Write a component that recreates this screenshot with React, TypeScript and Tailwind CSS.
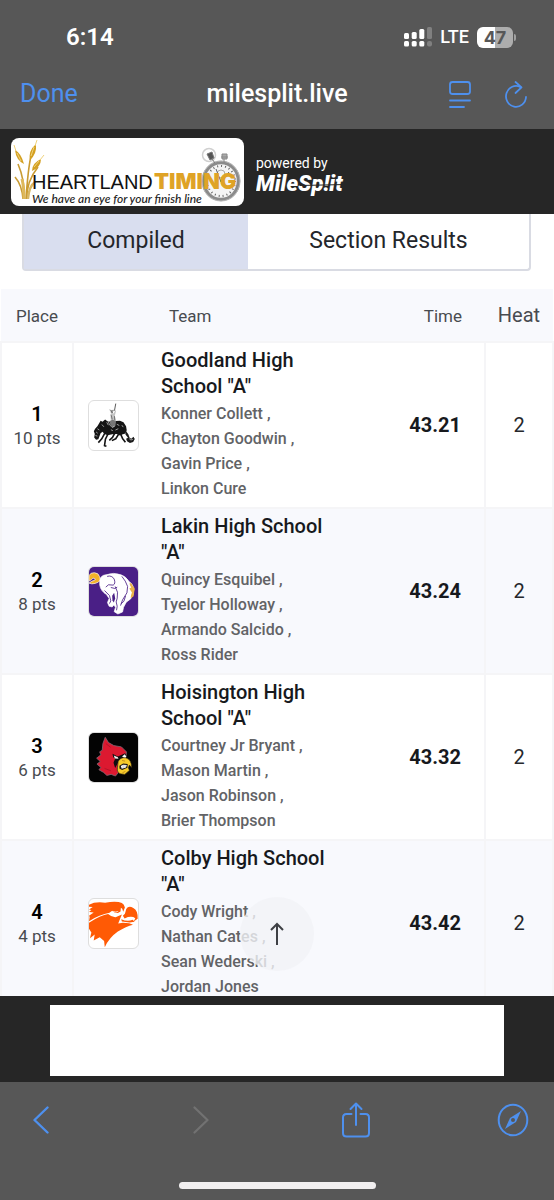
import React from "react";

type Team = {
  place: number;
  points: number;
  name: string;
  members: string[];
  time: string;
  heat: number;
  logo: React.ReactNode;
};

function CowboyLogo() {
  return (
    <svg viewBox="25 30 150 152" className="size-full" aria-hidden="true">
      <path d="M107 38 L103 60" stroke="#555" strokeWidth="3" fill="none" />
      <path d="M86 56 L94 58 L103 57 L99 62 L98 69 L92 69 L91 62 Z" fill="#999" />
      <path d="M90 71 L101 68 L106 58 L108 61 L104 76 L108 92 L92 94 Z" fill="#c4c4c4" />
      <path d="M93 74l3 13M103 77l1 13M92 62l5 4" stroke="#444" strokeWidth="2" fill="none" />
      <path
        d="M56 98 L60 91 L66 94 L74 87 L80 92 L90 94 L106 92 L120 91 L131 96 L139 108 L141 121 L137 131 L127 134 L120 137 L110 132 L96 133 L82 136 L72 132 L66 125 L60 130 L57 138 L53 149 L46 150 L40 143 L42 132 L39 124 L43 116 L50 108 Z"
        fill="#151515"
      />
      <path d="M138 122 L146 133 L150 144 L155 147 L162 141 L166 148 L161 157 L151 160 L142 155 L139 147 L145 144 L137 134 Z" fill="#1c1c1c" />
      <path
        d="M74 128 L63 148 L53 159M84 130 L75 148 L72 169 L78 170M104 130 L97 143 L87 152M117 131 L107 147 L95 153M121 130 L128 146 L137 158"
        stroke="#151515"
        strokeWidth="5"
        strokeLinejoin="round"
        fill="none"
      />
      <path d="M88 92 L98 88 L108 93 L106 107 L98 112 L90 104 Z" fill="#777" />
      <path
        d="M82 90l6 14 8 8 8-4M79 96l5 9M50 116l6 4M46 126l5 4M44 137l6 2M64 103l6 7M110 102l8 4M115 116l-9 4M126 105l4 6M92 119l6 3M149 147l5 4 6-2"
        stroke="#e6e6e6"
        strokeWidth="2"
        fill="none"
      />
    </svg>
  );
}

function BroncoLogo() {
  return (
    <svg viewBox="26 26 146 146" className="size-full" aria-hidden="true">
      <rect x="26" y="26" width="146" height="146" fill="#4a1f86" />
      <path
        d="M26 52 Q30 42 42 43 Q55 44 57 54 L61 64 Q55 73 44 75 Q34 78 26 74 L35 68 Q44 67 45 62 L38 59 Q34 65 26 68 Z"
        fill="#f3b229"
        stroke="#fff"
        strokeWidth="2"
      />
      <path
        d="M58 66 Q60 51 77 49 Q100 41 121 49 Q136 54 146 70 Q158 77 159 91 Q161 108 150 121 L137 131 L129 146 L126 160 L112 166 L101 159 L105 146 L100 139 L95 145 L86 143 L81 132 L86 120 L78 108 Q61 98 58 80 Z"
        fill="#fff"
        stroke="#fff"
        strokeWidth="2"
        strokeLinejoin="round"
      />
      <path
        d="M80 54 Q94 50 101 62 Q106 76 98 80 L84 79 L76 86M91 87 L103 90 L110 86M72 96 L87 111 L91 127 L87 135M104 84 Q115 101 110 119 L107 130 L110 143 L108 155M124 54 L134 68 L141 84 L139 103 L126 124 L120 141M135 112 L130 128 L121 136"
        fill="none"
        stroke="#4a1f86"
        strokeWidth="2.5"
      />
      <path d="M95 112 L101 103 L104 120 L100 132 L96 126 Z" fill="#4a1f86" />
      <path d="M147 73 Q155 74 157 83 Q165 89 161 98 L159 113 L150 120 Q150 110 154 102 L146 90 L152 87 Q146 81 147 73Z" fill="#eab24b" />
    </svg>
  );
}

function CardinalLogo() {
  return (
    <svg viewBox="26 26 148 148" className="size-full" aria-hidden="true">
      <rect x="26" y="26" width="148" height="148" fill="#030303" />
      <path
        d="M75 39 L85 55 L101 64 L124 68 L139 83 L138 96 L119 113 L112 132 L115 145 L106 156 L93 151 L80 154 L70 145 L56 137 L62 130 L50 120 L60 112 L49 102 L62 92 L58 83 L66 78 L68 58 Z"
        fill="#dc1930"
        stroke="#7e6875"
        strokeWidth="2.5"
      />
      <path d="M77 58 L91 69M73 133 L92 140" stroke="#9f1027" strokeWidth="2" fill="none" />
      <path d="M97 89 L113 97 L135 87 L141 98 L125 107 L116 112 L105 132 L100 116 L105 103 L99 99 Z" fill="#100e10" />
      <path d="M101 94l12 5 2 5-11-1z" fill="#f8f4f2" />
      <path d="M126 97l8-7 5 8-4 5z" fill="#fff" />
      <path
        d="M114 112 Q121 98 137 101 Q154 105 155 130 L148 123 L145 131 L148 139 L134 151 L119 149 Q108 142 112 130 Z"
        fill="#f7cb2b"
        stroke="#2d2412"
        strokeWidth="2"
      />
      <path d="M118 125 L129 118 L143 120 L142 131 L126 138 L118 133 Z" fill="#1c1714" />
      <path d="M122 126l7-4 11 1-2 7-13 4z" fill="#fff" />
      <path d="M129 122v11M135 122v9" stroke="#555" strokeWidth="1" />
      <path d="M126 109l9 2M127 146l9-4" stroke="#aa7416" strokeWidth="2" />
    </svg>
  );
}

function EagleLogo() {
  return (
    <svg viewBox="26 26 146 146" className="size-full" aria-hidden="true">
      <path
        d="M26 43 Q45 33 74 37 Q108 31 124 38 Q131 42 133 51 L128 64 L125 55 L121 52 L120 63 L112 68 Q101 68 95 61 L87 67 Q58 72 26 92 L28 80 L26 76 L40 66 L26 65 L33 59 L26 57 L37 50 L26 49 Z"
        fill="#ff5a05"
      />
      <path d="M137 56 Q144 44 158 53 Q172 60 171 85 L159 93 L164 83 Q155 76 142 80 L132 84 L127 76 L133 70 Z" fill="#ff5a05" />
      <path
        d="M26 97 Q61 74 83 71 Q93 81 107 80 L124 72 L119 84 L113 99 L127 97 L146 98 L157 103 Q137 108 112 123 Q86 141 73 170 L71 151 L58 140 L40 150 L43 132 L29 143 L33 126 L26 115 Z"
        fill="#ff5a05"
      />
      <path d="M90 66 Q99 76 112 72 L122 67M98 63 Q105 66 113 63" fill="none" stroke="#fff" strokeWidth="2" />
      <path d="M122 86 Q140 94 156 88 L162 94 L147 96 L124 93 Z" fill="#ff5a05" />
    </svg>
  );
}

const teams: Team[] = [
  {
    place: 1,
    points: 10,
    name: 'Goodland High School "A"',
    members: ["Konner Collett", "Chayton Goodwin", "Gavin Price", "Linkon Cure"],
    time: "43.21",
    heat: 2,
    logo: <CowboyLogo />,
  },
  {
    place: 2,
    points: 8,
    name: 'Lakin High School "A"',
    members: ["Quincy Esquibel", "Tyelor Holloway", "Armando Salcido", "Ross Rider"],
    time: "43.24",
    heat: 2,
    logo: <BroncoLogo />,
  },
  {
    place: 3,
    points: 6,
    name: 'Hoisington High School "A"',
    members: ["Courtney Jr Bryant", "Mason Martin", "Jason Robinson", "Brier Thompson"],
    time: "43.32",
    heat: 2,
    logo: <CardinalLogo />,
  },
  {
    place: 4,
    points: 4,
    name: 'Colby High School "A"',
    members: ["Cody Wright", "Nathan Cates", "Sean Wederski", "Jordan Jones"],
    time: "43.42",
    heat: 2,
    logo: <EagleLogo />,
  },
];

function StatusBar() {
  return (
    <div className="flex h-[74px] items-center justify-between pl-[66px] pr-[38px] text-white">
      <span className="text-2xl font-semibold">6:14</span>
      <div className="flex items-center gap-2">
        <svg width="28" height="20" viewBox="0 0 28 20" fill="#fff" aria-label="Signal strength">
          <rect x="0" y="6" width="5" height="6" rx="1.5" />
          <rect x="7.7" y="5" width="5" height="7" rx="1.5" />
          <rect x="15.3" y="2" width="5" height="10" rx="1.5" />
          <rect x="23" y="0" width="5" height="12" rx="1.5" fill="#808080" />
          <rect x="0" y="14" width="5" height="5.5" rx="1.5" />
          <rect x="7.7" y="14" width="5" height="5.5" rx="1.5" />
          <rect x="15.3" y="14" width="5" height="5.5" rx="1.5" />
          <rect x="23" y="14" width="5" height="5.5" rx="2" fill="#808080" />
        </svg>
        <span className="text-lg leading-6 font-medium">LTE</span>
        <div className="flex items-center gap-px">
          <div className="h-[21px] w-9 rounded-md bg-linear-to-r from-white from-50% to-[#adadad] to-50% text-center font-[Inter] text-lg leading-[21px] font-bold text-[#575757]">
            47
          </div>
          <span className="h-[7px] w-0.5 rounded-r-full bg-[#a0a0a0]" />
        </div>
      </div>
    </div>
  );
}

function NavBar() {
  return (
    <div className="grid h-[55px] grid-cols-[1fr_auto_1fr] items-start px-5 pt-0.5">
      <button type="button" className="justify-self-start text-[25px] leading-9 text-[#4e90ee]">
        Done
      </button>
      <h1 className="text-[25px] leading-9 font-medium text-white">milesplit.live</h1>
      <div className="flex items-center gap-8 justify-self-end pr-1.5 pt-1 text-[#4e90ee]">
        <button type="button" aria-label="Reader">
          <svg width="24" height="30" viewBox="0 0 24 30" fill="none" stroke="currentColor" strokeWidth="1.8" strokeLinecap="round">
            <rect x="2" y="2" width="20" height="12" rx="2.5" />
            <path d="M2 20.5h20M2 27h14" />
          </svg>
        </button>
        <button type="button" aria-label="Reload">
          <svg width="24" height="30" viewBox="0 0 24 30" fill="none" stroke="currentColor" strokeWidth="1.8" strokeLinecap="round" strokeLinejoin="round">
            <path d="M16.5 7.1A10 10.4 0 1 0 22 17" />
            <path d="M11.5 2l6 5.3-6 5.7" />
          </svg>
        </button>
      </div>
    </div>
  );
}

function HeartlandLogo() {
  return (
    <svg width="233" height="68" viewBox="0 0 233 68" role="img" aria-label="Heartland Timing">
      <g fill="none" strokeWidth="1.6" stroke="#c99b32">
        <path d="M13 61Q14 42 7 26M15 61Q17 31 20 18M16 61Q15 44 27 29M12 61Q11 47 4 39" />
        <path d="M17 61Q18 48 24 44" stroke="#d8b764" strokeWidth="2.4" />
        <path d="M13 61Q13 49 11 41" stroke="#deb85b" strokeWidth="3" />
      </g>
      <g fill="#d4a022">
        <path d="M4 12Q10 15 13 26Q5 22 4 12Z" />
        <path d="M25 6Q26 16 19 22Q17 13 25 6Z" />
        <path d="M30 21Q30 29 21 33Q21 25 30 21Z" />
      </g>
      <g stroke="#efd27c" strokeWidth="1" fill="none">
        <path d="M6 15l4 8M23 9l-3 9M28 23l-5 6M3 7l2 6M26 2l-2 6M33 17l-4 5" />
      </g>
      <ellipse cx="210" cy="43" rx="17.5" ry="18.5" fill="#f4f4f4" stroke="#8b8b8b" strokeWidth="3.5" />
      <ellipse cx="210" cy="43" rx="19" ry="20" fill="none" stroke="#bbb" strokeWidth="1" />
      <ellipse cx="210" cy="43" rx="14" ry="15" fill="none" stroke="#666" strokeWidth="2" strokeDasharray="1 3" />
      <circle cx="210" cy="36" r="4" fill="none" stroke="#aaa" />
      <path d="M210 44L205 31M210 44l8-10" stroke="#666" strokeWidth="1" />
      <path d="M211 16h5v5h-5zM210 19h7M213 21v4" fill="#aaa" stroke="#888" />
      <circle cx="198" cy="17" r="6.5" fill="none" stroke="#d0d0d0" strokeWidth="1.5" />
      <path d="M196 16l5-2 2 6-4 2zM201 21l3 4" fill="#555" stroke="#777" />
      <text x="21" y="51" fontFamily="Liberation Sans, sans-serif" fontSize="20" fill="#111">
        HEARTLAND
      </text>
      <text x="143" y="51" fontFamily="Inter, sans-serif" fontSize="22" fontWeight="900" fill="#dfa326">
        TIMING
      </text>
      <text x="21" y="65" fontFamily="Lato, sans-serif" fontStyle="italic" fontSize="12" fontWeight="500" fill="#222">
        We have an eye for your finish line
      </text>
    </svg>
  );
}

function SiteHeader() {
  return (
    <header className="flex h-[85px] shrink-0 items-center gap-3 bg-[#262626] px-[11px]">
      <a href="#home" className="block overflow-hidden rounded-lg bg-white">
        <HeartlandLogo />
      </a>
      <a href="#milesplit" className="flex flex-col pt-2 text-white">
        <span className="text-sm leading-4">powered by</span>
        <svg width="92" height="26" viewBox="0 0 92 26" role="img" aria-label="MileSplit">
          <text x="0" y="20" fontFamily="Roboto, sans-serif" fontSize="22" fontWeight="900" fontStyle="italic" fill="#fff">
            MileSp!it
          </text>
          <path d="M44 14.5l46-1" stroke="#262626" strokeWidth="1" />
        </svg>
      </a>
    </header>
  );
}

function ResultRow({ team }: { team: Team }) {
  return (
    <tr className="h-[166px] even:bg-[#f8f9fd]">
      <td className="border-2 border-[#f5f5f7] pt-0.5 text-center">
        <div className="text-xl leading-6 font-semibold text-black">{team.place}</div>
        <div className="text-[17px] leading-6 text-[#484b50]">{team.points} pts</div>
      </td>
      <td className="border-y-2 border-[#f5f5f7] pl-3.5">
        <div className="h-[51px] w-[51px] overflow-hidden rounded-md border border-[#dedede] bg-white">{team.logo}</div>
      </td>
      <td className="border-y-2 border-[#f5f5f7] pl-[11px] align-top">
        <div className="w-44 pt-1 text-xl leading-[26px] font-medium text-[#17191d]">{team.name}</div>
        <ul className="pt-0.5 text-base leading-[25px] font-medium text-[#626366]">
          {team.members.map((member, i) => (
            <li key={member}>
              {member}
              {i < team.members.length - 1 ? " ," : ""}
            </li>
          ))}
        </ul>
      </td>
      <td className="border-y-2 border-[#f5f5f7] pr-[23px] text-right text-xl font-bold text-[#17191d]">{team.time}</td>
      <td className="border-2 border-[#f5f5f7] text-center text-xl text-[#26282c]">{team.heat}</td>
    </tr>
  );
}

function Results() {
  return (
    <main className="relative min-h-0 flex-1 bg-white">
      <div className="h-full overflow-y-auto [scrollbar-width:none]">
        <div role="tablist" className="mr-[23px] ml-[22px] flex h-[57px] rounded-b border-2 border-t-0 border-[#d9dbe3] text-[23px] text-[#24262b]">
          <button type="button" role="tab" aria-selected="true" className="w-[224px] bg-[#d9deef]">
            Compiled
          </button>
          <button type="button" role="tab" aria-selected="false" className="flex-1">
            Section Results
          </button>
        </div>
        <table className="mt-[18px] w-full table-fixed border-collapse">
          <colgroup>
            <col className="w-[72px]" />
            <col className="w-[77px]" />
            <col />
            <col className="w-[110px]" />
            <col className="w-[68px]" />
          </colgroup>
          <thead>
            <tr className="h-[53px] bg-[#f8f9fd] text-[17px] text-[#484b50]">
              <th scope="col" className="pt-1 font-normal">Place</th>
              <th scope="col" colSpan={2} className="pt-1 pl-24 text-left font-normal">Team</th>
              <th scope="col" className="pt-1 pr-[23px] text-right font-normal">Time</th>
              <th scope="col" className="text-xl font-normal">Heat</th>
            </tr>
          </thead>
          <tbody>
            {teams.map((team) => (
              <ResultRow key={team.place} team={team} />
            ))}
          </tbody>
        </table>
      </div>
      <button
        type="button"
        aria-label="Back to top"
        className="absolute bottom-[25px] left-1/2 flex size-[74px] -translate-x-1/2 items-center justify-center rounded-full bg-[#f1f2f6]/80"
      >
        <svg width="14" height="24" viewBox="0 0 14 24" fill="none" stroke="#3e4045" strokeWidth="2">
          <path d="M7 23V2M1 8l6-6 6 6" />
        </svg>
      </button>
    </main>
  );
}

function BottomBar() {
  return (
    <footer className="flex h-[118px] shrink-0 flex-col items-center justify-between bg-[#575757] pb-[11px] pt-5">
      <nav className="flex w-full items-center justify-between px-6 text-[#4e90ee]">
        <button type="button" aria-label="Back" className="flex w-[34px] justify-center">
          <svg width="16" height="28" viewBox="0 0 16 28" fill="none" stroke="currentColor" strokeWidth="2.4" strokeLinecap="round" strokeLinejoin="round">
            <path d="M14.5 1.5L1.5 14l13 12.5" />
          </svg>
        </button>
        <button type="button" aria-label="Forward" disabled className="flex w-[34px] justify-center pl-1.5 text-[#727272]">
          <svg width="16" height="28" viewBox="0 0 16 28" fill="none" stroke="currentColor" strokeWidth="2.2" strokeLinecap="round" strokeLinejoin="round">
            <path d="M1.5 1.5L14.5 14l-13 12.5" />
          </svg>
        </button>
        <button type="button" aria-label="Share" className="flex w-[34px] justify-center">
          <svg width="28" height="36" viewBox="0 0 28 36" fill="none" stroke="currentColor" strokeWidth="2" strokeLinecap="round" strokeLinejoin="round">
            <path d="M9.5 12H4.5Q1 12 1 15.5V31Q1 34.5 4.5 34.5H23.5Q27 34.5 27 31V15.5Q27 12 23.5 12H18.5" />
            <path d="M14 23V1.5M8.5 7L14 1.5 19.5 7" />
          </svg>
        </button>
        <button type="button" aria-label="Open in browser" className="flex w-[34px] justify-center">
          <svg width="32" height="34" viewBox="0 0 32 34" fill="none" aria-hidden="true">
            <ellipse cx="16" cy="17" rx="14.3" ry="15.3" stroke="currentColor" strokeWidth="2" />
            <path d="M24 8L19 19 8 26 13 15Z" fill="currentColor" />
            <circle cx="16" cy="17" r="2" fill="#575757" />
          </svg>
        </button>
      </nav>
      <div className="h-[7px] w-[197px] rounded-full bg-[#f1eff0]" />
    </footer>
  );
}

export default function App() {
  return (
    <div className="flex h-screen flex-col bg-[#262626] font-[Roboto,sans-serif]">
      <div className="shrink-0 bg-[#575757]">
        <StatusBar />
        <NavBar />
      </div>
      <SiteHeader />
      <Results />
      <aside aria-label="Advertisement" className="flex h-[86px] shrink-0 justify-center bg-[#262626] px-[50px] pt-[9px] pb-1.5">
        <div className="w-full bg-white" />
      </aside>
      <BottomBar />
    </div>
  );
}
